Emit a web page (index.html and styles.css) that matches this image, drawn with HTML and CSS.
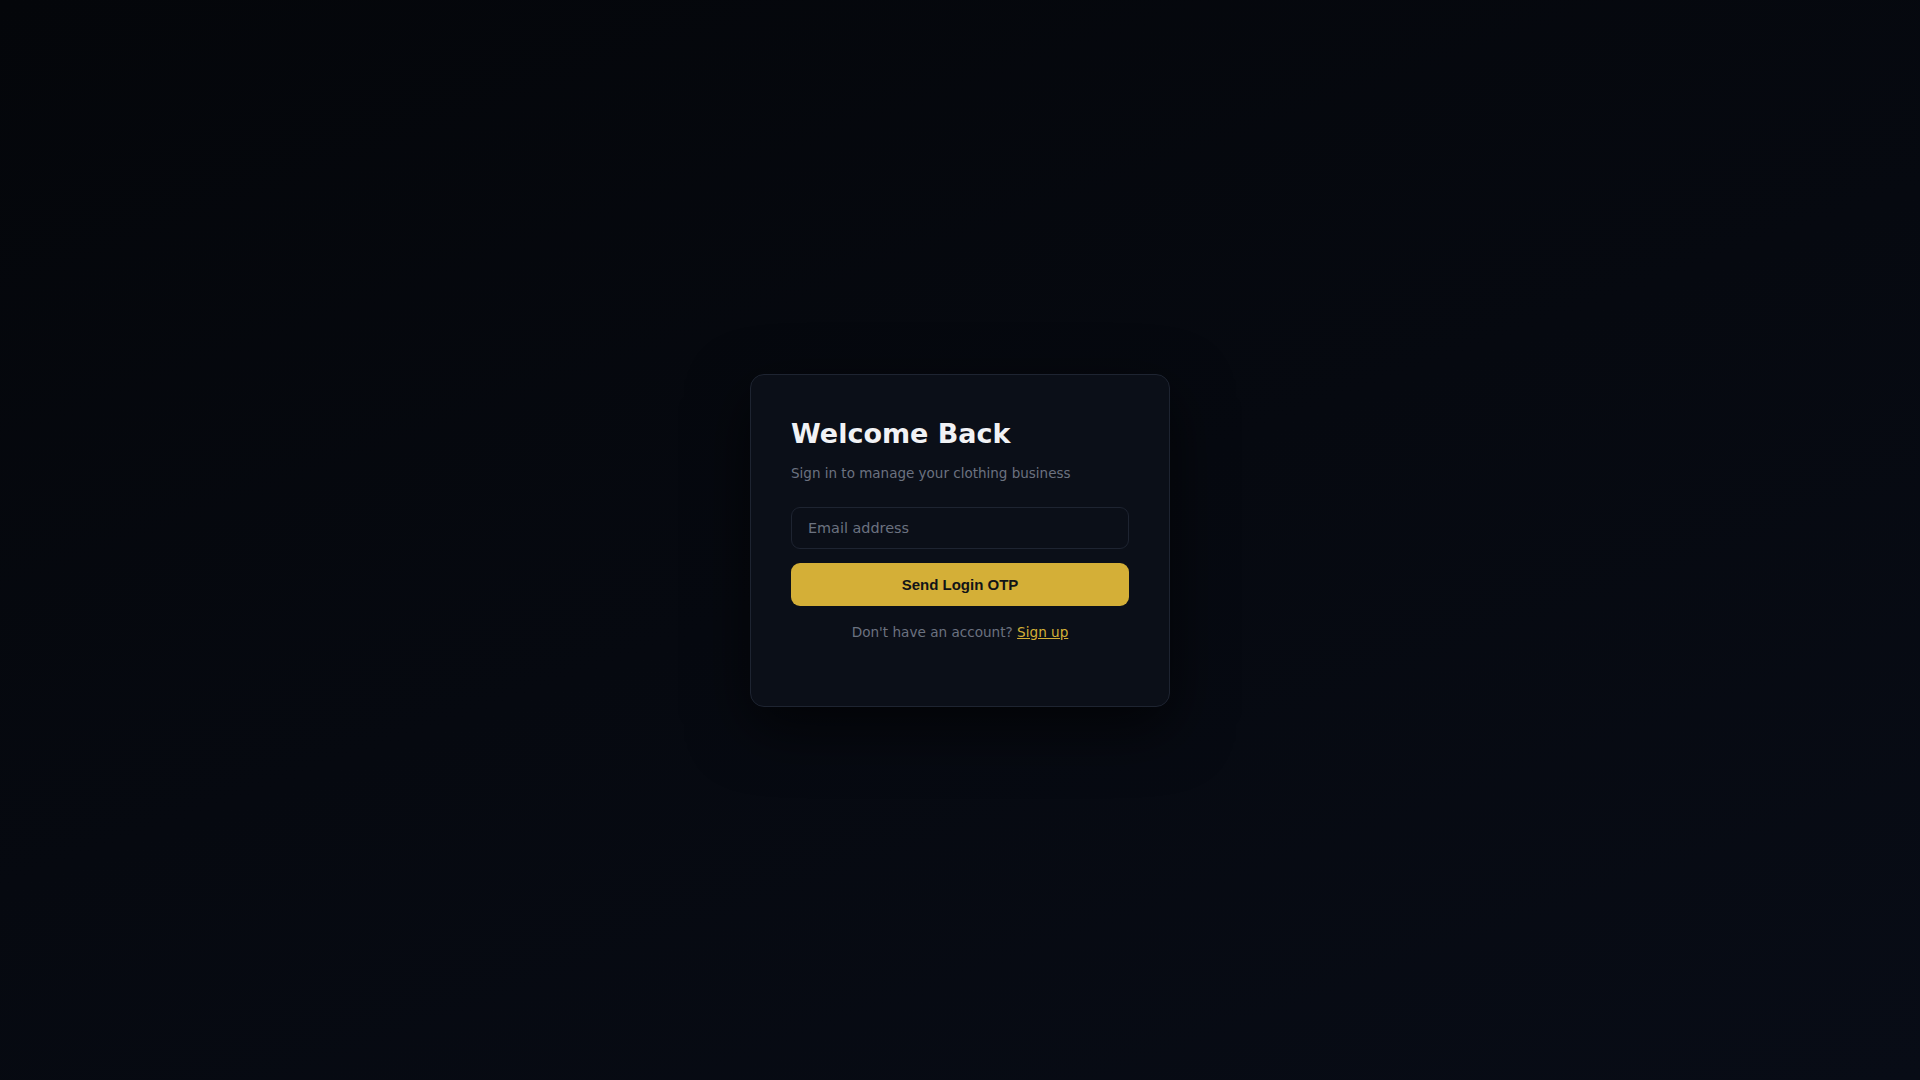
FILE: index.html
```html
<!DOCTYPE html>
<html lang="en">
<head>
<meta charset="utf-8">
<title>Welcome Back</title>
<link rel="stylesheet" href="styles.css">
</head>
<body>
<main class="page">
  <section class="card">
    <h1 class="title">Welcome Back</h1>
    <p class="subtitle">Sign in to manage your clothing business</p>
    <form class="form">
      <input class="input" type="email" placeholder="Email address">
      <button class="btn" type="button">Send Login OTP</button>
    </form>
    <p class="footer">Don't have an account? <a class="link" href="#">Sign up</a></p>
  </section>
</main>
</body>
</html>
```

FILE: styles.css
```css
* { box-sizing: border-box; }
html, body { margin: 0; padding: 0; height: 100%; }
body {
  font-family: "DejaVu Sans", sans-serif;
  background: linear-gradient(160deg, #04060a 0%, #060910 50%, #080c16 100%);
  color: #f3f4f6;
}
.page {
  min-height: 100vh;
  display: flex;
  align-items: center;
  justify-content: center;
}
.card {
  width: 420px;
  height: 333px;
  background: #0b0f18;
  border: 1px solid #1e2431;
  border-radius: 14px;
  padding: 42px 40px 40px;
  box-shadow: 0 20px 60px rgba(0, 0, 0, 0.65);
  display: flex;
  flex-direction: column;
}
.title {
  margin: 0;
  font-size: 27px;
  font-weight: 700;
  color: #f1f2f5;
  line-height: 34px;
}
.subtitle {
  margin: 13px 0 0;
  font-size: 13.5px;
  line-height: 18px;
  color: #6b7280;
}
.form {
  margin-top: 25px;
  display: flex;
  flex-direction: column;
  gap: 14px;
}
.input {
  height: 42px;
  width: 100%;
  padding: 0 16px;
  background: #0b0f18;
  border: 1px solid #1e2431;
  border-radius: 9px;
  font-family: "DejaVu Sans", sans-serif;
  font-size: 14.4px;
  color: #e5e7eb;
  outline: none;
}
.input::placeholder { color: #6b7280; }
.btn {
  height: 43px;
  width: 100%;
  border: none;
  border-radius: 9px;
  background: #d4af37;
  color: #111318;
  font-family: "Liberation Sans", Arial, sans-serif;
  font-weight: 700;
  font-size: 15px;
  cursor: pointer;
}
.footer {
  margin: 17px 0 0;
  text-align: center;
  font-size: 13.6px;
  line-height: 18px;
  color: #6b7280;
}
.link {
  color: #d4af37;
  text-decoration: underline;
}
```
